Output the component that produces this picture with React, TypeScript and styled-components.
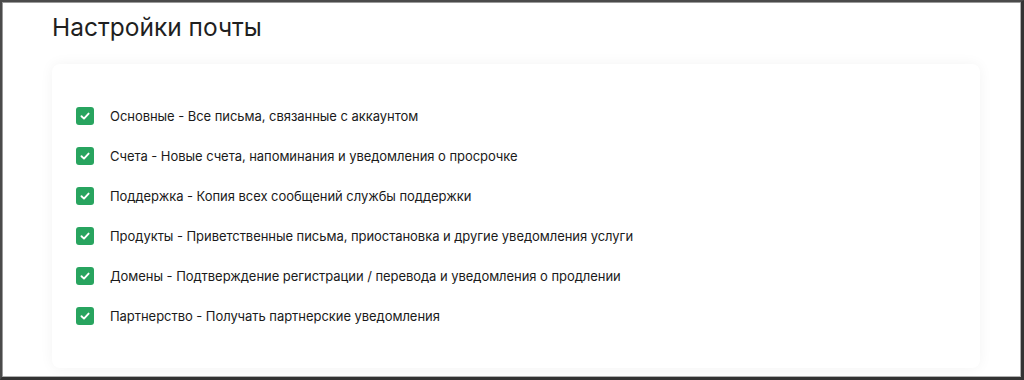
import React from "react";
import styled, { createGlobalStyle } from "styled-components";

const GlobalStyle = createGlobalStyle`
  html, body {
    margin: 0;
    padding: 0;
    background: #ffffff;
    font-family: Inter, Roboto, "Noto Sans", sans-serif;
  }
`;

const Frame = styled.div`
  box-sizing: border-box;
  width: 1024px;
  height: 380px;
  overflow: hidden;
  border-top: 2px solid #4a4a4a;
  border-left: 2px solid #4a4a4a;
  border-right: 3px solid #333333;
  border-bottom: 3px solid #333333;
  box-shadow: inset 1px 1px 0 #9a9a9a, inset -1px -1px 0 #b0b0b0;
  background: #ffffff;
  padding: 0 41px 0 50px;
`;

const Title = styled.h1`
  margin: 9px 0 0 0;
  font-size: 24.5px;
  font-weight: 400;
  color: #1f1f1f;
  line-height: 32px;
`;

const Card = styled.div`
  margin-top: 21px;
  background: #ffffff;
  border-radius: 8px;
  box-shadow: 0 0 14px rgba(0, 0, 0, 0.05);
  padding: 32px 24px 32px 24px;
`;

const List = styled.div`
  display: flex;
  flex-direction: column;
`;

const Row = styled.label`
  display: flex;
  align-items: center;
  gap: 16px;
  height: 40px;
  font-size: 13px;
  letter-spacing: -0.05px;
  color: #1a1a1a;
  cursor: pointer;
`;

const Box = styled.span<{ $checked?: boolean }>`
  width: 18px;
  height: 18px;
  border-radius: 3px;
  background: ${(p) => (p.$checked ? "#28a45f" : "#ffffff")};
  border: ${(p) => (p.$checked ? "none" : "1px solid #bbb")};
  display: flex;
  align-items: center;
  justify-content: center;
  flex-shrink: 0;
`;

const items = [
  "Основные - Все письма, связанные с аккаунтом",
  "Счета - Новые счета, напоминания и уведомления о просрочке",
  "Поддержка - Копия всех сообщений службы поддержки",
  "Продукты - Приветственные письма, приостановка и другие уведомления услуги",
  "Домены - Подтверждение регистрации / перевода и уведомления о продлении",
  "Партнерство - Получать партнерские уведомления",
];

function Check() {
  return (
    <svg width="12" height="12" viewBox="0 0 12 12">
      <path
        d="M2.5 6.2 L5 8.6 L9.6 3.6"
        fill="none"
        stroke="#ffffff"
        strokeWidth="1.9"
        strokeLinecap="round"
        strokeLinejoin="round"
      />
    </svg>
  );
}

export default function App() {
  return (
    <>
      <GlobalStyle />
      <Frame>
        <Title>Настройки почты</Title>
        <Card>
          <List>
            {items.map((text) => (
              <Row key={text}>
                <Box $checked>
                  <Check />
                </Box>
                {text}
              </Row>
            ))}
          </List>
        </Card>
      </Frame>
    </>
  );
}
